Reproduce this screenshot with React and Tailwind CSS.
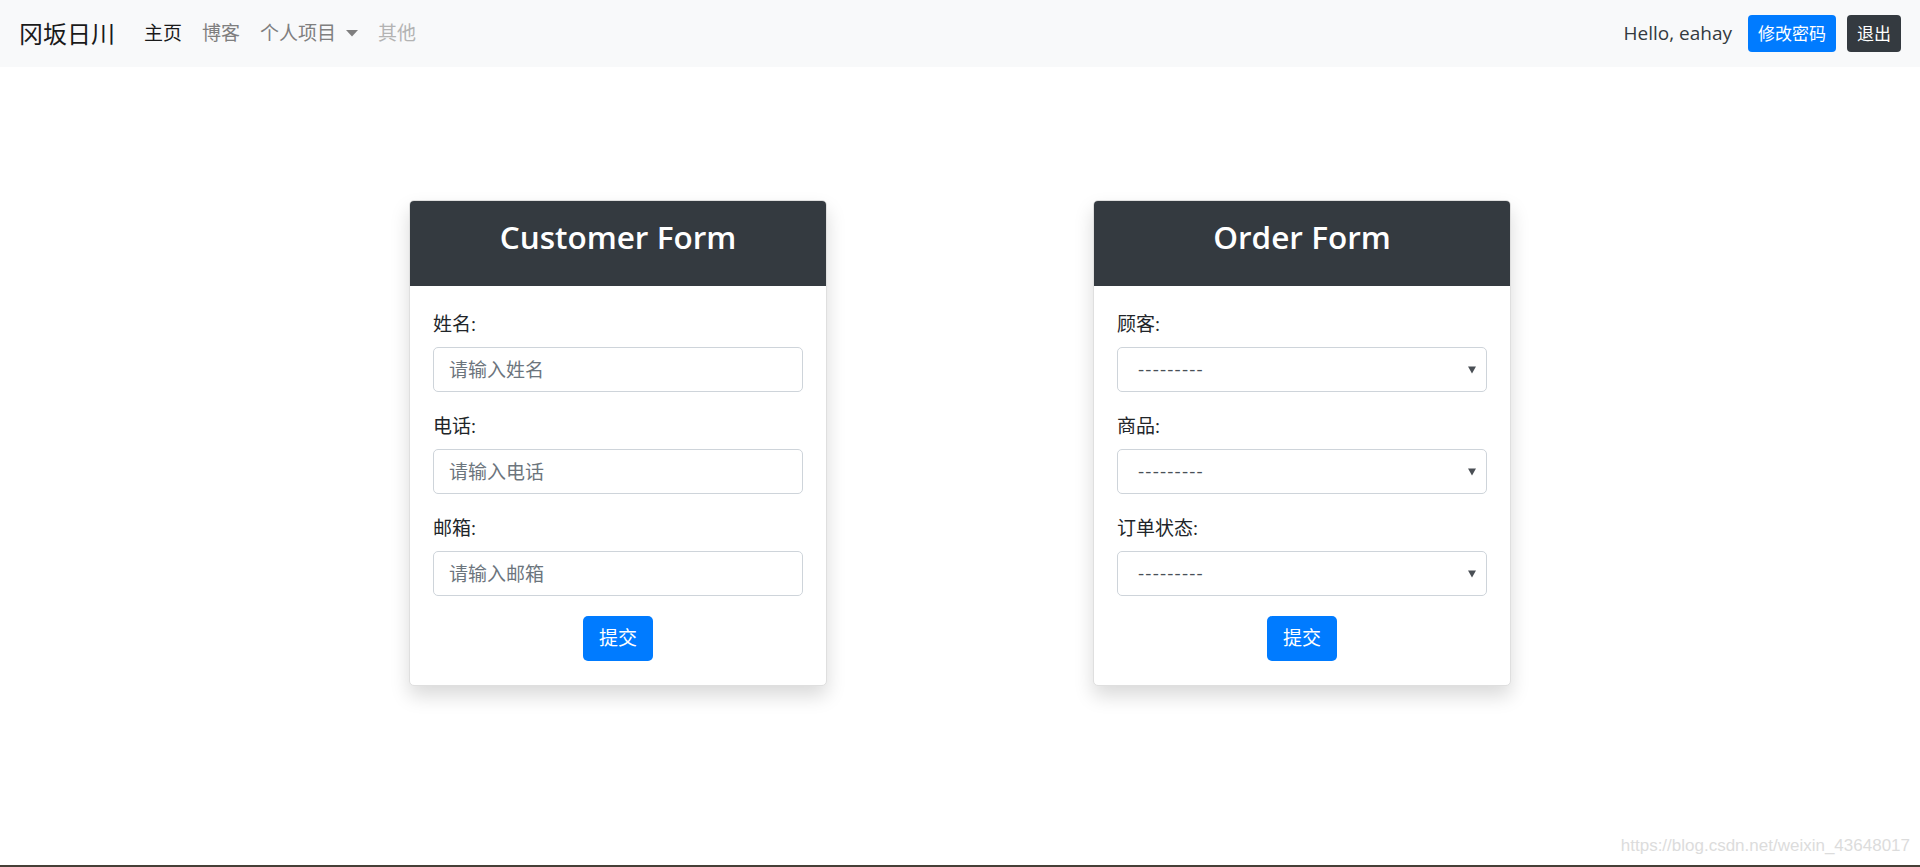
import React from "react";

const LATIN = { fontFamily: '"Open Sans", "Noto Sans CJK SC", sans-serif' };

function Field({ label, placeholder }) {
  return (
    <div className="mb-[20px]">
      <label className="block text-[19px] leading-[29px] mb-[8px] text-[#212529]">{label}</label>
      <input
        placeholder={placeholder}
        className="block w-full h-[45px] px-[15px] text-[19px] text-[#495057] placeholder:text-[#6c757d] border border-[#ced4da] rounded-[5px] bg-white outline-none"
      />
    </div>
  );
}

function SelectField({ label }) {
  return (
    <div className="mb-[20px]">
      <label className="block text-[19px] leading-[29px] mb-[8px] text-[#212529]">{label}</label>
      <div className="relative">
        <select className="block w-full h-[45px] pl-[20px] pr-[30px] text-[19px] text-[#495057] tracking-[1.2px] border border-[#ced4da] rounded-[5px] bg-white outline-none appearance-none">
          <option>---------</option>
        </select>
        <svg className="absolute right-[11px] top-[19px] pointer-events-none" width="8" height="8" viewBox="0 0 8 8">
          <path d="M0 0.5 L8 0.5 L4 7.5 Z" fill="#4a4f55" />
        </svg>
      </div>
    </div>
  );
}

function Card({ title, children }) {
  return (
    <div className="w-[418px] bg-white border border-[#dfdfdf] rounded-[5px] overflow-hidden shadow-[0_10px_19px_rgba(0,0,0,0.15)]">
      <div className="h-[85px] bg-[#343a40] flex items-start justify-center pt-[13px]">
        <h2 className="text-[31.5px] leading-[46px] font-semibold text-white">{title}</h2>
      </div>
      <div className="px-[23px] pt-[24px] pb-[24px]">
        {children}
        <div className="flex justify-center">
          <button className="h-[45px] w-[70px] bg-[#007bff] text-white text-[19px] rounded-[5px]">提交</button>
        </div>
      </div>
    </div>
  );
}

export default function App() {
  return (
    <div className="relative h-[867px] flex flex-col bg-white overflow-hidden" style={LATIN}>
      <nav className="h-[67px] shrink-0 bg-[#f8f9fa] flex items-center pl-[19px] pr-[19px]">
        <span className="text-[24px] text-[#1a1a1a] mr-[19px]">冈坂日川</span>
        <div className="flex items-center text-[19px]">
          <span className="px-[10px] text-[#1a1a1a]">主页</span>
          <span className="px-[10px] text-[#7f7f7f]">博客</span>
          <span className="px-[10px] text-[#7f7f7f] flex items-center">
            个人项目
            <svg className="ml-[10px]" width="12" height="7" viewBox="0 0 12 7">
              <path d="M0 0 L12 0 L6 6.5 Z" fill="#7f7f7f" />
            </svg>
          </span>
          <span className="px-[10px] text-[#b3b3b3]">其他</span>
        </div>
        <div className="ml-auto flex items-center">
          <span className="text-[19px] text-[#343a40] mr-[16px]">Hello, eahay</span>
          <button className="h-[37px] px-[10px] bg-[#007bff] text-white text-[17px] rounded-[4px] mr-[11px]">修改密码</button>
          <button className="h-[37px] px-[10px] bg-[#343a40] text-white text-[17px] rounded-[4px]">退出</button>
        </div>
      </nav>

      <main className="flex-1">
        <div className="w-[1368px] mx-auto grid grid-cols-2 pt-[133px]">
          <div className="flex justify-center">
            <Card title="Customer Form">
              <Field label="姓名:" placeholder="请输入姓名" />
              <Field label="电话:" placeholder="请输入电话" />
              <Field label="邮箱:" placeholder="请输入邮箱" />
            </Card>
          </div>
          <div className="flex justify-center">
            <Card title="Order Form">
              <SelectField label="顾客:" />
              <SelectField label="商品:" />
              <SelectField label="订单状态:" />
            </Card>
          </div>
        </div>
      </main>

      <div className="h-[2px] shrink-0 bg-[#463f37]" />
      <span
        className="absolute right-[10px] bottom-[9px] text-[17px] text-[#dcdcdc]"
        style={{ fontFamily: '"Liberation Sans", Arial, sans-serif' }}
      >
        https://blog.csdn.net/weixin_43648017
      </span>
    </div>
  );
}
